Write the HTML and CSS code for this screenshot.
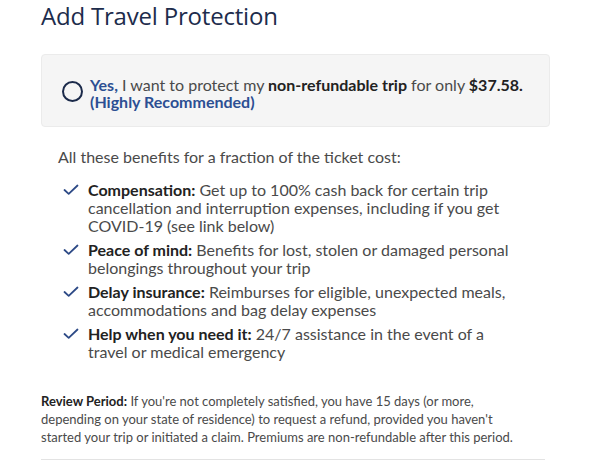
FILE: index.html
```html
<!DOCTYPE html>
<html>
<head>
<meta charset="utf-8">
<link rel="stylesheet" href="styles.css">
</head>
<body>
<div class="page">
  <h1 class="title">Add Travel Protection</h1>
  <div class="offer">
    <span class="radio"></span>
    <div class="offer-text">
      <span class="blue">Yes,</span> I want to protect my <b class="dark">non-refundable trip</b> for only <b class="dark">$37.58.</b><br>
      <span class="blue">(Highly Recommended)</span>
    </div>
  </div>
  <div class="benefits">
    <p class="intro">All these benefits for a fraction of the ticket cost:</p>
    <ul class="list">
      <li class="item">
        <svg class="check" viewBox="0 0 16 16" width="16" height="16"><path d="M1.5 8l4.2 3.8L14.5 3.5" fill="none" stroke="#2d4a86" stroke-width="1.8" stroke-linecap="round" stroke-linejoin="round"/></svg>
        <div class="item-text"><b>Compensation:</b> Get up to 100% cash back for certain trip cancellation and interruption expenses, including if you get COVID-19 (see link below)</div>
      </li>
      <li class="item">
        <svg class="check" viewBox="0 0 16 16" width="16" height="16"><path d="M1.5 8l4.2 3.8L14.5 3.5" fill="none" stroke="#2d4a86" stroke-width="1.8" stroke-linecap="round" stroke-linejoin="round"/></svg>
        <div class="item-text"><b>Peace of mind:</b> Benefits for lost, stolen or damaged personal belongings throughout your trip</div>
      </li>
      <li class="item">
        <svg class="check" viewBox="0 0 16 16" width="16" height="16"><path d="M1.5 8l4.2 3.8L14.5 3.5" fill="none" stroke="#2d4a86" stroke-width="1.8" stroke-linecap="round" stroke-linejoin="round"/></svg>
        <div class="item-text"><b>Delay insurance:</b> Reimburses for eligible, unexpected meals, accommodations and bag delay expenses</div>
      </li>
      <li class="item">
        <svg class="check" viewBox="0 0 16 16" width="16" height="16"><path d="M1.5 8l4.2 3.8L14.5 3.5" fill="none" stroke="#2d4a86" stroke-width="1.8" stroke-linecap="round" stroke-linejoin="round"/></svg>
        <div class="item-text"><b>Help when you need it:</b> 24/7 assistance in the event of a travel or medical emergency</div>
      </li>
    </ul>
  </div>
  <p class="review"><b>Review Period:</b> If you're not completely satisfied, you have 15 days (or more, depending on your state of residence) to request a refund, provided you haven't started your trip or initiated a claim. Premiums are non-refundable after this period.</p>
  <div class="rule"></div>
</div>
</body>
</html>
```
FILE: styles.css
```css
html, body {
  margin: 0;
  padding: 0;
  background: #fff;
}
body {
  font-family: Lato, "Open Sans", sans-serif;
  color: #4a4a4a;
  overflow: hidden;
  height: 461px;
}
.page {
  width: 509px;
  margin-left: 41px;
}
.title {
  margin: 0;
  font-family: "Open Sans", sans-serif;
  font-weight: 400;
  font-size: 24px;
  line-height: 32px;
  color: #1d2c4c;
  letter-spacing: -0.2px;
}
.offer {
  margin-top: 22px;
  height: 73px;
  box-sizing: border-box;
  background: #f5f5f5;
  border: 1px solid #ebebeb;
  border-radius: 4px;
  display: flex;
  align-items: center;
  padding-left: 20px;
  gap: 7px;
}
.radio {
  width: 17px;
  height: 17px;
  border: 2.5px solid #1b2a4a;
  border-radius: 50%;
  flex: none;
  margin-top: 2px;
}
.offer-text {
  font-size: 16px;
  line-height: 17px;
  color: #4a4a4a;
  padding-top: 5px;
}
.blue {
  color: #2c4f93;
  font-weight: 700;
}
.dark {
  color: #222;
}
.benefits {
  padding-left: 17px;
}
.intro {
  margin: 21px 0 0;
  font-size: 16px;
  line-height: 18px;
}
.list {
  list-style: none;
  margin: 15px 0 0;
  padding: 0;
  display: flex;
  flex-direction: column;
  gap: 6px;
}
.item {
  display: flex;
  gap: 9px;
  font-size: 16px;
  line-height: 18px;
  padding-left: 5px;
}
.item-text {
  width: 436px;
}
.item b {
  color: #222;
}
.check {
  flex: none;
  margin-top: 1px;
}
.review {
  margin: 31px 0 0;
  font-size: 13px;
  line-height: 18px;
  width: 490px;
}
.review b {
  color: #222;
}
.rule {
  margin-top: 13px;
  width: 504px;
  border-top: 1px solid #e3e3e3;
}
```
